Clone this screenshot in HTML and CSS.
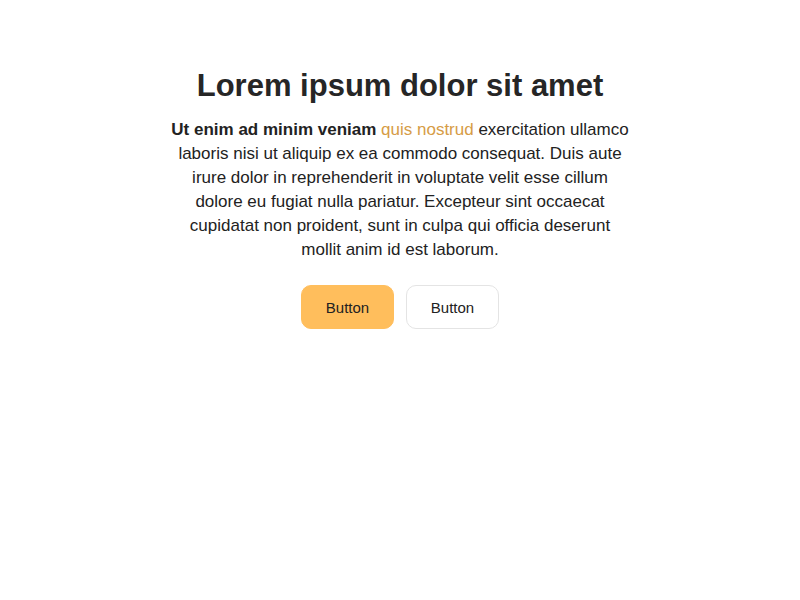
FILE: index.html
```html
<!DOCTYPE html>
<html>
<head>
<meta charset="utf-8">
<link rel="stylesheet" href="styles.css">
</head>
<body>
<main class="hero">
  <h1 class="title">Lorem ipsum dolor sit amet</h1>
  <p class="lead"><strong>Ut enim ad minim veniam</strong> <a class="link" href="#">quis nostrud</a> exercitation ullamco laboris nisi ut aliquip ex ea commodo consequat. Duis aute irure dolor in reprehenderit in voluptate velit esse cillum dolore eu fugiat nulla pariatur. Excepteur sint occaecat cupidatat non proident, sunt in culpa qui officia deserunt mollit anim id est laborum.</p>
  <div class="actions">
    <button class="btn btn-primary">Button</button>
    <button class="btn btn-secondary">Button</button>
  </div>
</main>
</body>
</html>
```
FILE: styles.css
```css
html, body {
  margin: 0;
  padding: 0;
  background: #fff;
}
body {
  font-family: "Liberation Sans", Arial, sans-serif;
  color: #222;
}
.hero {
  display: flex;
  flex-direction: column;
  align-items: center;
  padding-top: 66px;
}
.title {
  margin: 0;
  font-size: 31px;
  line-height: 40px;
  font-weight: 700;
  color: #262626;
}
.lead {
  margin: 12px 0 0;
  max-width: 462px;
  text-align: center;
  font-size: 17px;
  line-height: 24px;
  color: #222;
}
.link {
  color: #d69c46;
  text-decoration: none;
}
.actions {
  display: flex;
  gap: 12px;
  margin-top: 23px;
}
.btn {
  font-family: "Liberation Sans", Arial, sans-serif;
  font-size: 15px;
  color: #222;
  width: 93px;
  height: 44px;
  border-radius: 10px;
  cursor: pointer;
}
.btn-primary {
  background: #ffbe5c;
  border: 1px solid #ffbe5c;
}
.btn-secondary {
  background: #fff;
  border: 1px solid #e4e4e4;
}
```
